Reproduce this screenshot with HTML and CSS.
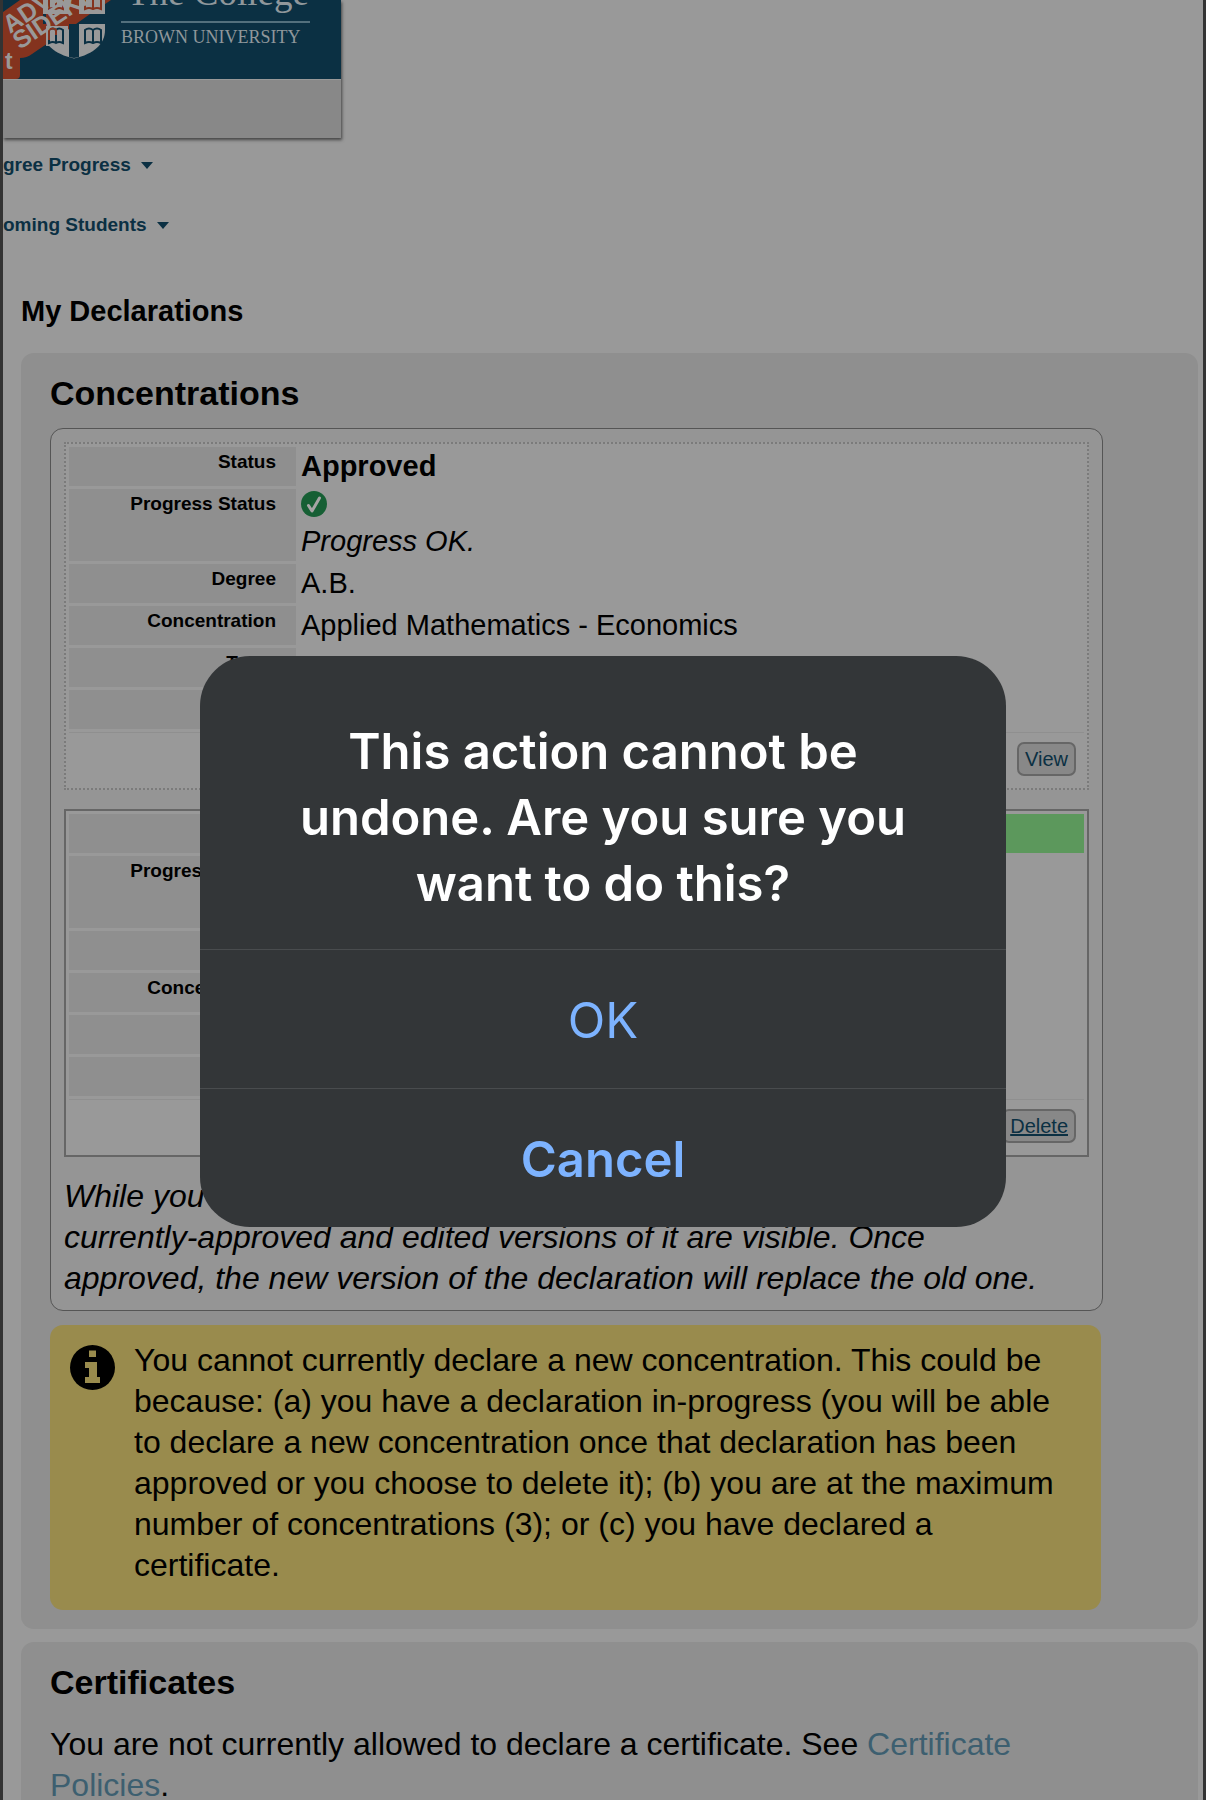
FILE: index.html
```html
<!DOCTYPE html>
<html lang="en">
<head>
<meta charset="utf-8">
<meta name="viewport" content="width=device-width, initial-scale=1">
<title>My Declarations</title>
<link rel="stylesheet" href="styles.css">
</head>
<body>
<div class="page">
  <header class="banner">
    <svg class="logo" viewBox="3 0 338 79" role="img" aria-label="The College, Brown University">
      <rect x="3" y="0" width="338" height="79" fill="#0b3043"/>
      <path d="M3 12 L20 0 H111 L32 54 Q27 58 20 58 V75 Q20 79 16 79 H3Z" fill="#84331e"/>
      <path d="M43 0 H105 V30 C105 44 94 54 74 58.500 C54 54 43 44 43 30Z" fill="#999"/>
      <path d="M69 0 H79 V57 L74 58 L69 57Z M43 14 H105 V24 H43Z" fill="#0b3043"/>
      <path d="M69 0 H79 V14 H90 L76 24 H69 V29 L43 46 V24 H46 V14 H69Z" fill="#84331e"/>
      <path d="M46 26 H68 V44 Q68 46 66 46 H46Z M46 0 H68 V12 H46Z M80 0 H102 V12 H80Z" fill="#999"/>
      <path d="M49 43 V30 Q53 27 56 30 Q59 27 63 30 V43 Q59 41 56 43 Q53 41 49 43Z M56 30 V43 M85 43 V30 Q89 27 93 30 Q97 27 101 30 V43 Q97 41 93 43 Q89 41 85 43Z M93 30 V43" fill="none" stroke="#0b3043" stroke-width="2"/>
      <path d="M49 0 V9 Q53 7 56 9 Q59 7 63 9 V0 M56 0 V9 M85 0 V9 Q89 7 93 9 Q97 7 101 9 V0 M93 0 V9 M49 40 V30 Q53 27 56 30 V35" fill="none" stroke="#84331e" stroke-width="2"/>
      <g class="ribbon">
        <text x="10" y="34" transform="rotate(-34 10 34)">ADVISING</text>
        <text x="20" y="50" transform="rotate(-34 20 50)">SIDEKICK</text>
        <text class="tag" x="5" y="69">t</text>
      </g>
      <text class="wordmark" x="127" y="5">The College</text>
      <rect x="121" y="21" width="189" height="2" fill="#53707d"/>
      <text class="submark" x="121" y="43">BROWN UNIVERSITY</text>
    </svg>
    <div class="banner-bar"></div>
  </header>

  <nav class="menu">
    <a href="#progress">gree Progress<span class="caret"></span></a>
    <a href="#students">oming Students<span class="caret"></span></a>
  </nav>

  <main>
    <h1>My Declarations</h1>

    <section class="panel">
      <h2>Concentrations</h2>
      <div class="list">
        <div class="card">
          <table>
            <tr><th scope="row">Status</th><td><strong>Approved</strong></td></tr>
            <tr class="tall"><th scope="row">Progress Status</th><td>
              <svg class="check" viewBox="0 0 26 26" aria-label="OK"><circle cx="13" cy="13" r="13" fill="#165f34"/><path d="M7.500 14.500 L11 20 L18.500 7" fill="none" stroke="#a5a5a5" stroke-width="3" stroke-linecap="round" stroke-linejoin="round"/></svg>
              <em>Progress OK.</em></td></tr>
            <tr><th scope="row">Degree</th><td>A.B.</td></tr>
            <tr><th scope="row">Concentration</th><td>Applied Mathematics - Economics</td></tr>
            <tr><th scope="row">Track</th><td></td></tr>
            <tr><th scope="row"></th><td></td></tr>
          </table>
          <div class="actions"><button type="button">View</button></div>
        </div>

        <div class="card pending">
          <table>
            <tr><th scope="row"></th><td class="highlight"></td></tr>
            <tr class="tall"><th scope="row">Progress Status</th><td></td></tr>
            <tr><th scope="row"></th><td></td></tr>
            <tr><th scope="row">Concentration</th><td></td></tr>
            <tr><th scope="row"></th><td></td></tr>
            <tr><th scope="row"></th><td></td></tr>
          </table>
          <div class="actions"><button type="button" class="underlined">Delete</button></div>
        </div>

        <p class="note">While you<br>currently-approved and edited versions of it are visible. Once approved, the new version of the declaration will replace the old one.</p>
      </div>

      <div class="notice">
        <svg class="info" viewBox="0 0 45 45" aria-hidden="true"><circle cx="22.500" cy="22.500" r="22.500"/><path d="M19 5.500 H26 V12 H19Z M15 17 H27V32 H30 V38 H15 V32 H19 V23 H15Z" fill="#998b4d"/></svg>
        <p>You cannot currently declare a new concentration. This could be because: (a) you have a declaration in-progress (you will be able to declare a new concentration once that declaration has been approved or you choose to delete it); (b) you are at the maximum number of concentrations (3); or (c) you have declared a certificate.</p>
      </div>
    </section>

    <section class="panel">
      <h2>Certificates</h2>
      <p class="lead">You are not currently allowed to declare a certificate. See <a href="#policies">Certificate Policies</a>.</p>
    </section>
  </main>
  <span class="edge-mark"></span>
</div>

<div class="overlay">
  <div class="dialog" role="alertdialog" aria-modal="true" aria-labelledby="dialog-title">
    <p id="dialog-title">This action cannot be undone. Are you sure you want to do this?</p>
    <button type="button">OK</button>
    <button type="button" class="preferred">Cancel</button>
  </div>
</div>
</body>
</html>
```

FILE: styles.css
```css
* { box-sizing: border-box; }

body {
  margin: 0;
  background: #999;
  color: #000;
  font-family: "Liberation Sans", Arial, sans-serif;
  font-size: 29px;
}

h1, h2, p { margin: 0; }

.page {
  position: relative;
  height: 100vh;
  overflow: hidden;
  border: solid #333;
  border-width: 0 3px;
}

.edge-mark {
  position: absolute;
  right: -3px;
  top: 1402px;
  width: 3px;
  height: 9px;
  border-radius: 3px 0 0 3px;
  background: #111;
}

/* Banner */
.banner {
  width: 338px;
  box-shadow: 1px 2px 3px #444;
}

.logo { display: block; width: 338px; height: 79px; }

.ribbon {
  font-size: 25px;
  font-weight: bold;
  fill: #999;
}

.tag { font-size: 23px; }

.wordmark, .submark {
  font-family: "Liberation Serif", "Times New Roman", serif;
  fill: #8f979b;
}

.wordmark { font-size: 37px; }
.submark { font-size: 18px; }

.banner-bar {
  height: 59px;
  border-top: 1px solid #999;
  background: #888;
}

/* Menu */
.menu {
  display: flex;
  flex-direction: column;
  gap: 38px;
  padding-top: 16px;
  font-size: 19px;
  font-weight: bold;
  line-height: 22px;
}

.menu a {
  display: flex;
  align-items: center;
  gap: 10px;
  color: #0b3043;
  text-decoration: none;
}

.caret {
  border: 6px solid transparent;
  border-top: 7px solid #0b3043;
  border-bottom: 0;
}

/* Content */
main { padding: 58px 5px 0 18px; }

h1 {
  margin-bottom: 25px;
  font-size: 29px;
  line-height: 34px;
}

h2 {
  margin-bottom: 15px;
  font-size: 34px;
  line-height: 40px;
}

.panel {
  margin-bottom: 13px;
  padding: 20px 97px 19px 29px;
  border-radius: 13px;
  background: #8f8f8f;
}

.list {
  margin-right: -2px;
  padding: 13px 13px 11px;
  border: 1px solid #555;
  border-radius: 13px;
  background: #959595;
}

.card {
  margin-bottom: 19px;
  padding: 3px;
  border: 2px dotted #7b7b7b;
  background: #999;
}

.pending { border: 2px solid #666; }

table {
  width: 100%;
  border-collapse: separate;
  border-spacing: 0;
  border-bottom: 1px solid #8f8f8f;
}

tr { height: 42px; }
.tall { height: 75px; }

th, td {
  padding: 0;
  border-bottom: 3px solid #999;
  vertical-align: top;
}

th {
  width: 227px;
  padding-right: 20px;
  background: #8f8f8f;
  font-size: 19px;
  line-height: 30px;
  text-align: right;
}

td {
  padding-left: 5px;
  line-height: 38px;
}

.highlight { background: #5c985c; }

.check {
  display: block;
  width: 26px;
  height: 26px;
  margin: 2px 0 5px;
}

td em { display: block; }

.actions {
  display: flex;
  justify-content: flex-end;
  padding: 9px 8px;
}

.actions button {
  height: 34px;
  padding: 0 6px;
  border: 2px solid #666;
  border-radius: 7px;
  background: #888;
  color: #0b3043;
  font: 20px "Liberation Sans", Arial, sans-serif;
}

.actions .underlined { text-decoration: underline; }

.note, .notice, .lead {
  font-size: 32px;
  line-height: 41px;
}

.note {
  padding-right: 30px;
  font-style: italic;
}

.notice {
  display: flex;
  align-items: flex-start;
  gap: 19px;
  margin-top: 14px;
  padding: 15px 20px 24px;
  border-radius: 13px;
  background: #998b4d;
}

.info {
  flex: none;
  width: 45px;
  height: 45px;
  margin-top: 5px;
}

.lead { padding-top: 7px; }
.lead a { color: #3d5f70; text-decoration: none; }

/* Dialog */
.overlay {
  position: fixed;
  inset: 0;
  display: flex;
  align-items: center;
  justify-content: center;
  padding-top: 83px;
}

.dialog {
  width: 806px;
  border-radius: 50px;
  overflow: hidden;
  background: #333638;
  color: #fff;
  font-family: Inter, sans-serif;
  font-size: 49px;
  text-align: center;
}

.dialog p {
  padding: 63px 80px 32px;
  font-weight: 600;
  line-height: 66px;
}

.dialog button {
  display: block;
  width: 100%;
  height: 139px;
  padding: 3px 0 0;
  border: 0;
  border-top: 1px solid #494c4e;
  background: none;
  color: #7db3ff;
  font: inherit;
}

.dialog .preferred { font-weight: 600; }
```
